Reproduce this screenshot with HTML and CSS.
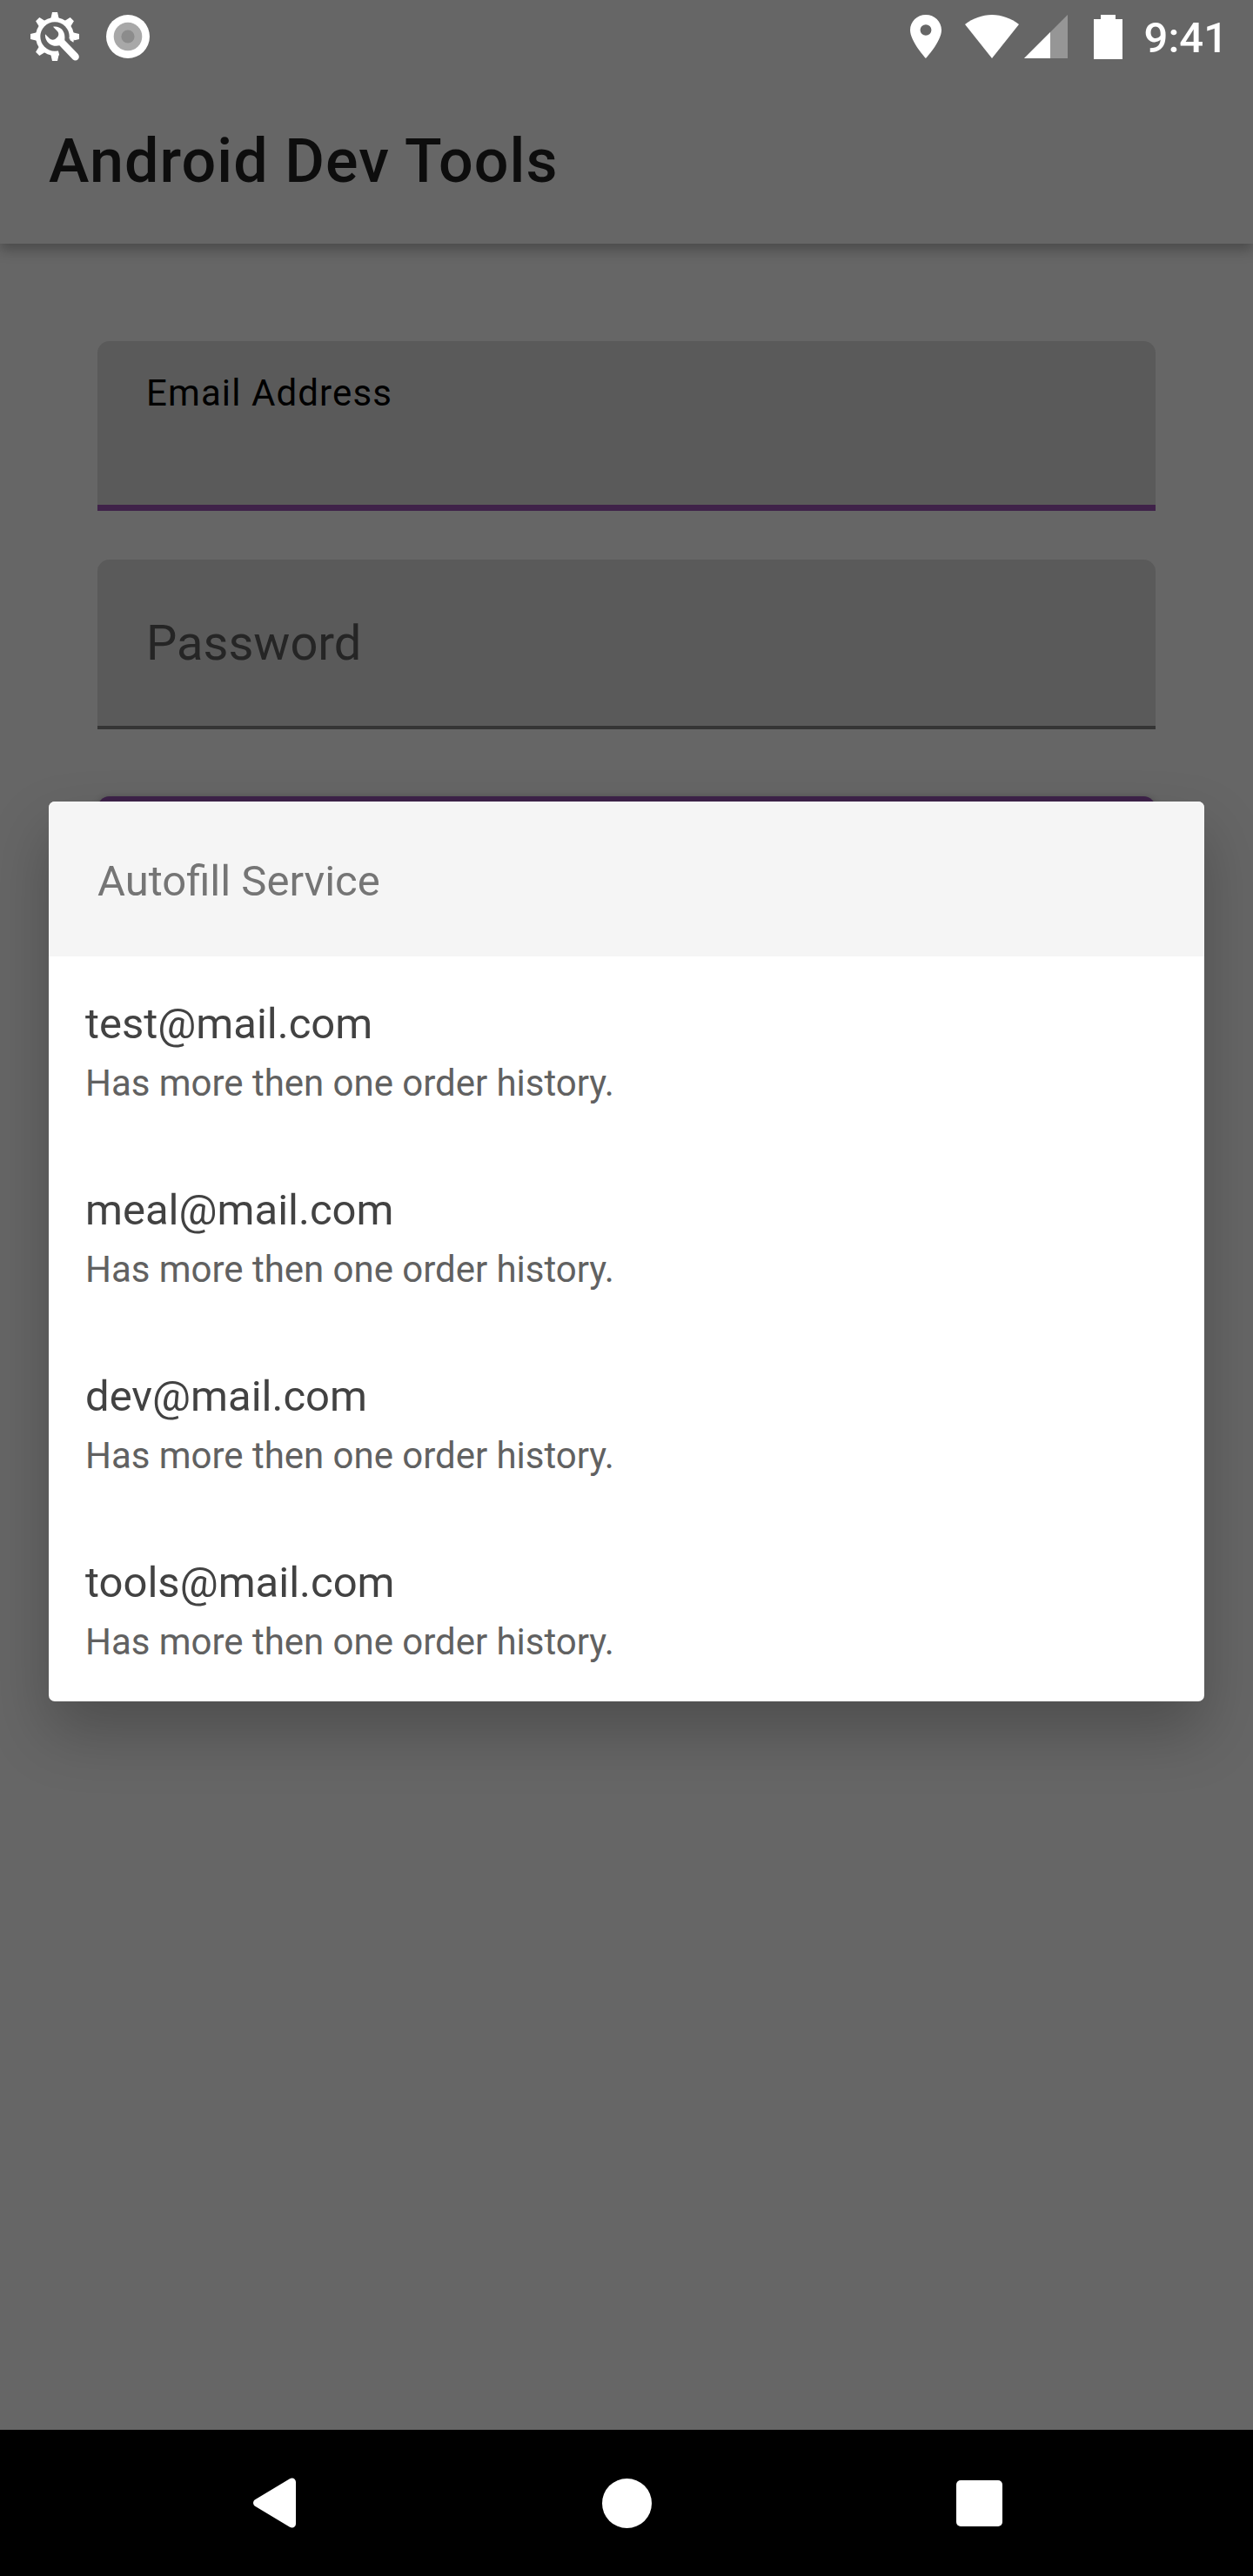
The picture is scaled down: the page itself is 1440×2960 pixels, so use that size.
FILE: index.html
```html
<!DOCTYPE html>
<html lang="en">
<head>
<meta charset="utf-8">
<title>Android Dev Tools</title>
<link rel="stylesheet" href="styles.css">
</head>
<body>
<div class="screen">
  <div class="status-bar">
    <div class="status-left">
      <svg class="icon-gear" width="56" height="56" viewBox="0 0 168 168">
        <mask id="gear-cut">
          <rect width="168" height="168" fill="#fff"/>
          <path d="M84 84L150 94L175 175L100 150Z" fill="#000"/>
          <circle cx="84" cy="84" r="50" fill="#000"/>
        </mask>
        <g fill="#fff" mask="url(#gear-cut)">
          <circle cx="84" cy="84" r="66"/>
          <g id="teeth">
            <path id="tooth" d="M75 0H93L98 22H70Z"/>
            <use href="#tooth" transform="rotate(45 84 84)"/>
            <use href="#tooth" transform="rotate(90 84 84)"/>
            <use href="#tooth" transform="rotate(180 84 84)"/>
            <use href="#tooth" transform="rotate(225 84 84)"/>
            <use href="#tooth" transform="rotate(270 84 84)"/>
            <use href="#tooth" transform="rotate(315 84 84)"/>
          </g>
        </g>
        <path fill="#fff" d="M78 50C102 46 121 64 118 92L118 97L163 143C176 158 158 174 146 163L100 115C75 122 48 103 51 76L66 91C71 96 80 96 86 92L94 85C98 80 98 71 93 66Z"/>
        <path fill="#fff" d="M168 78V90L150 92L148 104L136 96L138 76Z"/>
      </svg>
      <svg width="50" height="50" viewBox="0 0 50 50">
        <circle cx="25" cy="25" r="25" fill="#fff"/>
        <circle cx="25" cy="25" r="16.3" fill="#a8a8a8"/>
        <circle cx="25" cy="25" r="7.6" fill="#8c8c8c"/>
      </svg>
    </div>
    <div class="status-right">
      <svg width="36" height="50" viewBox="0 0 14 20" preserveAspectRatio="none">
        <path fill="#fff" fill-rule="evenodd" d="M7 0C3.13 0 0 3.13 0 7c0 5.25 7 13 7 13s7-7.75 7-13c0-3.87-3.13-7-7-7zm0 9.500a2.500 2.500 0 1 1 0-5 2.500 2.500 0 0 1 0 5z"/>
      </svg>
      <svg class="icon-wifi" width="62" height="50" viewBox="0 0 62 50">
        <path fill="#fff" d="M31 50L0 11C9 4 20 0 31 0S53 4 62 11Z"/>
      </svg>
      <svg class="icon-signal" width="50" height="50" viewBox="0 0 50 50">
        <path fill="#969696" d="M0 50L50 0V50Z"/>
        <path fill="#fff" d="M0 50L30 20V50Z"/>
      </svg>
      <svg class="icon-battery" width="33" height="51" viewBox="0 0 33 51">
        <path fill="#fff" d="M8 0H25V5H33V51H0V5H8Z"/>
      </svg>
      <span class="clock">9:41</span>
    </div>
  </div>
  <header class="app-bar">
    <h1 class="app-title">Android Dev Tools</h1>
  </header>
  <main class="content">
    <div class="field field-focused"><label class="label-small">Email Address</label></div>
    <div class="field field-idle"><label class="label-large">Password</label></div>
    <div class="submit"></div>
  </main>
  <nav class="nav-bar">
    <div class="nav-item">
      <svg width="49" height="58" viewBox="0 0 49 58">
        <path fill="#fff" d="M42 1.200C45 -.7 49 1 49 5V53C49 57 45 58.700 42 56.800L2.500 33C-.8 31 -.8 27 2.500 25Z"/>
      </svg>
    </div>
    <div class="nav-item"><span class="nav-home"></span></div>
    <div class="nav-item"><span class="nav-recent"></span></div>
  </nav>
  <section class="autofill">
    <h2 class="autofill-title">Autofill Service</h2>
    <div class="entry"><p class="entry-name">test@mail.com</p><p class="entry-note">Has more then one order history.</p></div>
    <div class="entry"><p class="entry-name">meal@mail.com</p><p class="entry-note">Has more then one order history.</p></div>
    <div class="entry"><p class="entry-name">dev@mail.com</p><p class="entry-note">Has more then one order history.</p></div>
    <div class="entry"><p class="entry-name">tools@mail.com</p><p class="entry-note">Has more then one order history.</p></div>
  </section>
</div>
</body>
</html>
```
FILE: styles.css
```css
* { box-sizing: border-box; }
body, h1, h2, p { margin: 0; font-weight: 400; }
svg { display: block; flex: none; }
body { font-family: Roboto, sans-serif; background: #666; }

.screen {
  position: relative;
  display: flex;
  flex-direction: column;
  width: 1440px;
  height: 2960px;
  overflow: hidden;
  background: #666;
}

.status-bar {
  display: flex;
  justify-content: space-between;
  height: 84px;
  padding: 0 29px 0 35px;
}
.status-left, .status-right { display: flex; align-items: center; }
.status-left { gap: 31px; }
.icon-wifi { margin-left: 27px; }
.icon-signal { margin-left: 6px; }
.icon-battery { margin-left: 30px; }
.clock {
  margin: 4px 0 0 25px;
  font-size: 49px;
  font-weight: 500;
  line-height: 58px;
  color: #fff;
}

.app-bar {
  height: 196px;
  padding: 60px 56px 0;
  box-shadow: 0 7px 14px rgba(0, 0, 0, .28);
  clip-path: inset(0 0 -30px 0);
}
.app-title {
  font-size: 70px;
  font-weight: 500;
  line-height: 82px;
  letter-spacing: 1.1px;
  color: #0d0d0d;
}

.content { flex: 1; padding: 112px 112px 0; }
.field {
  height: 195px;
  padding: 0 56px;
  border-radius: 14px 14px 0 0;
  background: #5a5a5a;
}
.field label { display: block; }
.field-focused { padding-top: 35px; box-shadow: inset 0 -7px #3f2249; }
.field-idle { margin-top: 56px; padding-top: 64px; box-shadow: inset 0 -4px #353535; }
.label-small { font-size: 42px; line-height: 50px; letter-spacing: 1.1px; color: #000; }
.label-large { font-size: 56px; line-height: 64px; color: #252525; }
.submit {
  height: 126px;
  margin-top: 77px;
  border-radius: 14px;
  background: #3d2249;
  box-shadow: 0 3px 8px rgba(0, 0, 0, .4);
}

.nav-bar {
  display: flex;
  justify-content: center;
  height: 168px;
  background: #000;
}
.nav-item { display: flex; align-items: center; justify-content: center; width: 405px; }
.nav-home { width: 57px; height: 57px; border-radius: 50%; background: #fff; }
.nav-recent { width: 53px; height: 53px; border-radius: 5px; background: #fff; }

.autofill {
  position: absolute;
  top: 921px;
  left: 56px;
  width: 1328px;
  height: 1034px;
  border-radius: 7px;
  background: #fff;
  box-shadow: 0 35px 70px rgba(0, 0, 0, .24);
}
.autofill-title {
  height: 178px;
  padding: 63px 56px 0;
  border-radius: 7px 7px 0 0;
  background: #f5f5f5;
  font-size: 49px;
  line-height: 58px;
  color: #757575;
}
.entry { height: 214px; padding: 49px 42px 0; }
.entry-name { font-size: 49px; line-height: 58px; color: #424242; }
.entry-note { margin-top: 14px; font-size: 42px; line-height: 50px; letter-spacing: -.03px; color: #616161; }
```
